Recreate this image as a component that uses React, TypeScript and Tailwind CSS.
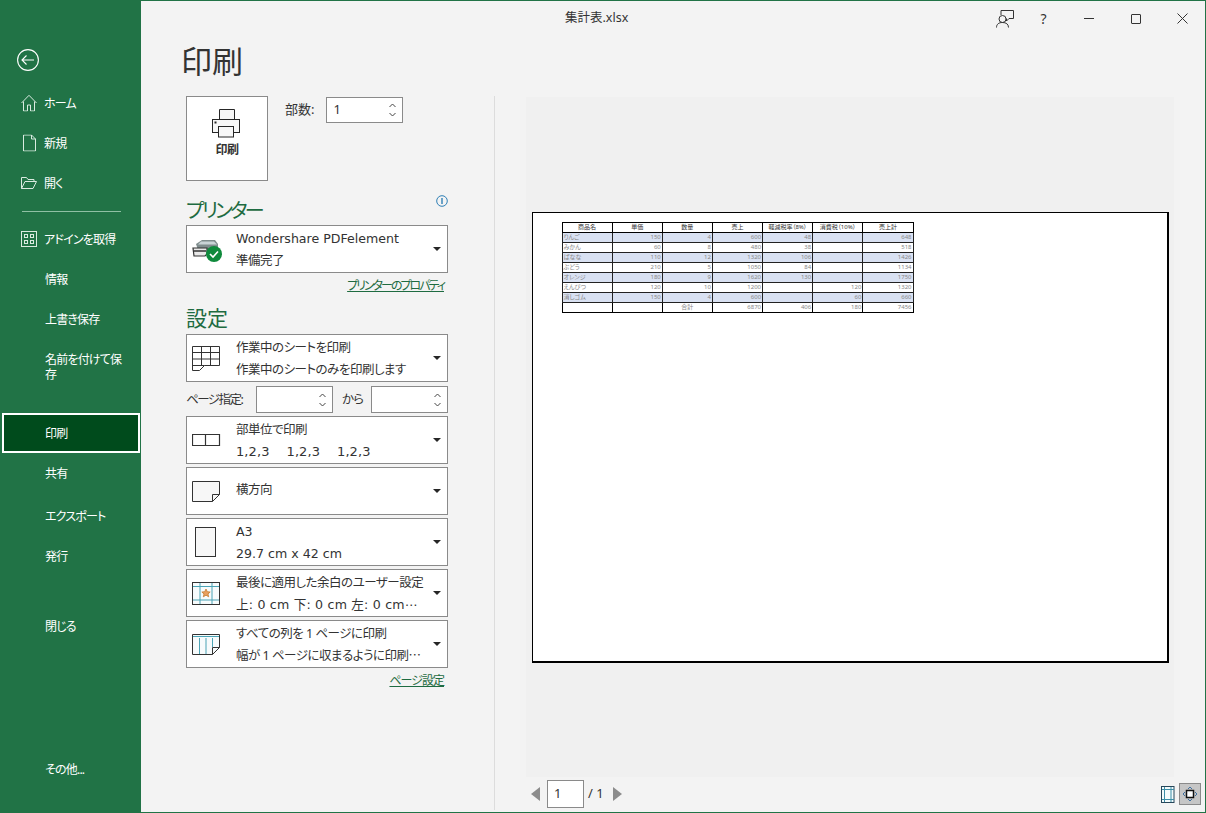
import React from "react";

const font = "font-['Noto_Sans','Noto_Sans_CJK_JP',sans-serif] [font-feature-settings:'palt']";
const latinFont = "font-['DejaVu_Sans','Noto_Sans_CJK_JP',sans-serif]";

function Back() {
  return (
    <svg width="24" height="24" viewBox="0 0 24 24" fill="none" stroke="white" strokeWidth="1.1">
      <circle cx="12" cy="12" r="10.4" />
      <path d="M6 12h12M10.5 7.5 6 12l4.5 4.5" />
    </svg>
  );
}
const HomeI = () => (
  <svg width="16" height="17" viewBox="0 0 16 17" fill="none" stroke="#d9ebe0" strokeWidth="1">
    <path d="M.5 8.5 8 .8l7.5 7.7M2.500 7v9.500h4V10.500h3v6h4V7" />
  </svg>
);
const NewI = () => (
  <svg width="13" height="17" viewBox="0 0 13 17" fill="none" stroke="#d9ebe0" strokeWidth="1">
    <path d="M.5.5h8l4 4v12H.5zM8.500.5v4h4" />
  </svg>
);
const OpenI = () => (
  <svg width="16" height="12" viewBox="0 0 16 12" fill="none" stroke="#d9ebe0" strokeWidth="1">
    <path d="M.5 11.500V.5h5l1.500 2h6v2M.5 11.500h11.500l3.500-7H4l-3.500 7" />
  </svg>
);
const AddinI = () => (
  <svg width="16" height="16" viewBox="0 0 16 16" fill="none" stroke="#d9ebe0" strokeWidth="1">
    <rect x=".5" y=".5" width="15" height="15" />
    <rect x="3.500" y="3.500" width="3" height="3" />
    <rect x="9.500" y="3.500" width="3" height="3" />
    <rect x="3.500" y="9.500" width="3" height="3" />
    <rect x="9.500" y="9.500" width="3" height="3" />
  </svg>
);

function NavRow({ icon, label, h = "h-10" }: { icon?: React.ReactNode; label: React.ReactNode; h?: string }) {
  return (
    <div className={`relative flex items-center ${h} ${icon ? "pl-[43px]" : "pl-[44px]"} text-[12px] leading-[15px] tracking-[-0.8px] text-white`}>
      {icon && <span className="absolute left-[20px] top-1/2 flex w-4 -translate-y-1/2 justify-center">{icon}</span>}
      <span>{label}</span>
    </div>
  );
}

const PrinterBig = () => (
  <svg width="30" height="29" viewBox="0 0 30 29" fill="none" stroke="#262626" strokeWidth="1">
    <path d="M7.500 10.500V.5h15v10" fill="#f7f7f7" />
    <rect x=".5" y="10.500" width="27" height="13" fill="#f7f7f7" />
    <rect x="6.500" y="17.500" width="15" height="10.500" fill="#f7f7f7" />
    <rect x="2.500" y="12.500" width="2" height="2" fill="#262626" stroke="none" />
  </svg>
);

const Caret = () => (
  <svg width="8" height="4" viewBox="0 0 8 4" className="shrink-0"><path d="M0 0h8L4 4z" fill="#262626" /></svg>
);

const Spin = () => (
  <div className="flex flex-col items-center gap-[4px] text-[#444]">
    <svg width="7" height="5" viewBox="0 0 7 5" fill="none" stroke="#444"><path d="M.5 4 3.500 1l3 3" /></svg>
    <svg width="7" height="5" viewBox="0 0 7 5" fill="none" stroke="#444"><path d="M.5 1l3 3 3-3" /></svg>
  </div>
);

const jp = "text-[12.5px] tracking-[-0.5px]";
const lat = `${latinFont} text-[12.6px] tracking-normal`;

function Drop({ icon, a, b, single, aClass = jp, bClass = jp }: { icon: React.ReactNode; a: string; b?: string; single?: boolean; aClass?: string; bClass?: string }) {
  return (
    <div className="flex h-12 w-[262px] items-center border border-[#8a8a8a] bg-white pr-[6px]">
      <div className="flex w-[49px] shrink-0 justify-start pl-[5px]">{icon}</div>
      <div className={`flex min-w-0 flex-1 flex-col ${single ? "pb-[3px]" : "gap-[5px]"} leading-[17px] text-[#333]`}>
        <div className={`whitespace-nowrap ${aClass}`}>{a}</div>
        {b && <div className={`whitespace-pre ${bClass}`}>{b}</div>}
      </div>
      <Caret />
    </div>
  );
}

const PrinterSmall = () => (
  <svg width="31" height="24" viewBox="0 0 31 24" className="mt-[4px]">
    <path d="M4 5 10 1h13l3 4v6l-4 3H7z" fill="#7f8c8d" />
    <path d="M9 2.500h13l3 3H6z" fill="#c9d3d6" />
    <path d="M1 9h14v6l-2 2H2z" fill="#e9e9e9" stroke="#333" strokeWidth="1.200" />
    <path d="M2 12h12" stroke="#333" strokeWidth="1.500" />
    <circle cx="22" cy="15" r="8" fill="#0f8a3c" />
    <path d="M18 15l3 3 5-5.500" stroke="white" strokeWidth="1.600" fill="none" />
  </svg>
);
const SheetI = () => (
  <svg width="29" height="25" viewBox="0 0 29 25" fill="none" stroke="#333" strokeWidth="1">
    <path d="M.5.5h27v19h-15l-5 5H.5zM.5 6.500h27M.5 13h27M9.500.5v19M18.500.5v19M.5 19.500h12" />
  </svg>
);
const CollateI = () => (
  <svg width="29" height="12" viewBox="0 0 29 12" fill="none" stroke="#333" strokeWidth="1">
    <path d="M.5.5h27v11H.5zM13.500.5v11" strokeWidth="1.200" />
  </svg>
);
const LandI = () => (
  <svg width="29" height="21" viewBox="0 0 29 21" fill="none" stroke="#333" strokeWidth="1">
    <path d="M.5.5h27v13l-7 7H.5z" fill="#f7f7f7" />
    <path d="M20.500 20.500v-7h7" />
  </svg>
);
const PageI = () => (
  <svg width="21" height="30" viewBox="0 0 21 30" fill="#f7f7f7" stroke="#333" strokeWidth="1" className="ml-[3px]">
    <rect x=".5" y=".5" width="20" height="29" />
  </svg>
);
const MarginI = () => (
  <svg width="28" height="23" viewBox="0 0 28 23" fill="none">
    <rect x=".5" y=".5" width="27" height="22" fill="#f7fbfc" stroke="#333" />
    <path d="M8 1v21M20 1v21M1 4.500h26M1 18h26" stroke="#4ba3b5" />
    <path d="M14 7l1.300 2.700 2.900.3-2.200 1.900.7 2.900-2.700-1.600-2.700 1.600.7-2.900-2.200-1.900 2.900-.3z" fill="#e8a060" stroke="#c0701f" strokeWidth=".7" />
  </svg>
);
const ScaleI = () => (
  <svg width="28" height="21" viewBox="0 0 28 21" fill="none">
    <path d="M.5.5h27v13l-7 7H.5z" fill="#f7fbfc" stroke="#333" />
    <path d="M7.500 4v16M14 4v16M20.500 4v9M1 2.500h26" stroke="#4ba3b5" />
    <path d="M20.500 20.500v-7h7" stroke="#333" />
  </svg>
);

const rows: string[][] = [
  ["りんご", "150", "4", "600", "48", "", "648"],
  ["みかん", "60", "8", "480", "38", "", "518"],
  ["ばなな", "110", "12", "1320", "106", "", "1426"],
  ["ぶどう", "210", "5", "1050", "84", "", "1134"],
  ["オレンジ", "180", "9", "1620", "130", "", "1750"],
  ["えんぴつ", "120", "10", "1200", "", "120", "1320"],
  ["消しゴム", "150", "4", "600", "", "60", "660"],
];
const head = ["商品名", "単価", "数量", "売上", "軽減税率（8%）", "消費税（10%）", "売上計"];
const foot = ["", "", "合計", "6870", "406", "180", "7456"];

function Sheet() {
  return (
    <table className="w-[352px] table-fixed border-collapse border border-black text-[6px] leading-[8px] text-[#888]">
      <tbody>
        <tr className="h-[10px]">
          {head.map((c) => (
            <td key={c} className="overflow-hidden whitespace-nowrap border border-black text-center text-[#333]">{c}</td>
          ))}
        </tr>
        {rows.map((r, i) => (
          <tr key={i} className={`h-[10px] ${i % 2 === 0 ? "bg-[#d9e1f2]" : "bg-white"}`}>
            {r.map((c, j) => (
              <td key={j} className={`border border-[#222] px-px ${j === 0 ? "text-left" : "text-right"}`}>{c}</td>
            ))}
          </tr>
        ))}
        <tr className="h-[10px]">
          {foot.map((c, j) => (
            <td key={j} className={`border border-black px-px ${j === 2 ? "text-center" : "text-right"}`}>{c}</td>
          ))}
        </tr>
      </tbody>
    </table>
  );
}

export default function App() {
  return (
    <div className={`flex h-[813px] w-[1206px] overflow-hidden border border-[#217346] bg-[#f3f3f3] ${font}`}>
      <aside className="flex w-[140px] shrink-0 flex-col bg-[#217346]">
        <div className="flex h-[82px] items-start pl-[15px] pt-[47px]"><Back /></div>
        <NavRow icon={<HomeI />} label="ホーム" />
        <NavRow icon={<NewI />} label="新規" />
        <NavRow icon={<OpenI />} label="開く" />
        <div className="mx-[21px] mb-[7px] mt-[8px] h-px w-[99px] bg-[#8fc0a4]" />
        <NavRow icon={<AddinI />} label="アドインを取得" />
        <NavRow label="情報" />
        <NavRow label="上書き保存" />
        <NavRow label={<>名前を付けて保<br />存</>} h="h-[55px]" />
        <div className="h-[19px]" />
        <div className="ml-px flex h-10 w-[138px] items-center border-2 border-white bg-[#004b1c] pb-px pl-[41px] pt-[2px] text-[12px] tracking-[-0.7px] text-white">印刷</div>
        <NavRow label="共有" />
        <div className="h-[3px]" />
        <NavRow label="エクスポート" />
        <NavRow label="発行" />
        <div className="h-[30px]" />
        <NavRow label="閉じる" />
        <div className="flex-1" />
        <NavRow label="その他..." />
        <div className="h-[23px]" />
      </aside>

      <main className="flex min-w-0 flex-1 flex-col">
        <header className="flex h-[35px] items-center justify-between">
          <span className="pl-[424px] text-[12.5px] text-[#333]">集計表.xlsx</span>
          <div className="flex items-center text-[#333]">
            <span className="flex w-[38px] justify-center">
              <svg width="18" height="18" viewBox="0 0 18 18" fill="none" stroke="#333" strokeWidth="1">
                <path d="M5 5V.5h12.500v8H13L10.500 11V8.500" />
                <circle cx="6.500" cy="9" r="3.500" fill="#f3f3f3" />
                <path d="M.5 17.500c0-3.500 2.500-5 6-5s6 1.500 6 5" />
              </svg>
            </span>
            <span className="mr-[3px] flex w-[39px] justify-center text-[14px] leading-none">?</span>
            <span className="flex h-8 w-[46px] items-center justify-center"><span className="h-px w-[10px] bg-[#333]" /></span>
            <span className="flex h-8 w-[47px] items-center justify-center"><span className="h-[10px] w-[10px] rounded-[1px] border border-[#333]" /></span>
            <span className="flex h-8 w-[46px] items-center justify-center">
              <svg width="11" height="11" viewBox="0 0 11 11" stroke="#333"><path d="M.5.5l10 10M10.500.5l-10 10" /></svg>
            </span>
          </div>
        </header>

        <div className="flex h-[60px] items-start pl-[40px] pt-[5px] text-[31px] leading-[40px] text-[#333]">印刷</div>

        <div className="flex min-h-0 flex-1">
          <section className="flex w-[353px] shrink-0 flex-col pl-[45px]">
            <div className="flex items-start">
              <div className="flex h-[85px] w-[82px] flex-col items-center border border-[#8a8a8a] bg-white pt-[12px]">
                <PrinterBig />
                <span className="mt-[3px] text-[12px] font-bold tracking-[-0.5px] text-[#333]">印刷</span>
              </div>
              <span className="ml-[17px] pt-[5px] text-[13px] leading-[17px] text-[#333]">部数:</span>
              <div className="ml-[12px] mt-px flex h-[26px] w-[77px] items-center justify-between border border-[#8a8a8a] bg-white pl-[6px] pr-[6px] text-[13px] text-[#333]">
                1<Spin />
              </div>
            </div>

            <div className="relative mt-[13px] h-[31px] w-[262px] pt-[3px] text-[20px] leading-[28px] tracking-[-2.8px] text-[#1e6b41]">
              プリンター
              <svg className="absolute right-0 top-[1px]" width="12" height="12" viewBox="0 0 12 12" fill="none" stroke="#2f7fb5"><circle cx="6" cy="6" r="5.300" /><path d="M6 3v6" strokeWidth="1.400" /></svg>
            </div>
            <Drop icon={<PrinterSmall />} a="Wondershare PDFelement" aClass={lat} b="準備完了" />
            <div className="mt-[4px] w-[258px] text-right text-[12px] leading-[17px] tracking-[-2px] text-[#1e6b41] underline">プリンターのプロパティ</div>
            <div className="mt-[10px] h-[30px] text-[21px] leading-[29px] text-[#1e6b41]">設定</div>
            <Drop icon={<SheetI />} a="作業中のシートを印刷" b="作業中のシートのみを印刷します" />
            <div className="mt-[4px] flex h-[27px] w-[262px] items-center text-[12.5px] text-[#333]">
              <span className="w-[70px] pt-px tracking-[-1.500px]">ページ指定:</span>
              <div className="flex h-[27px] w-[77px] items-center justify-end border border-[#8a8a8a] bg-white pr-[6px]"><Spin /></div>
              <span className="w-[38px] pl-[9px] pt-px tracking-[-1px]">から</span>
              <div className="flex h-[27px] w-[77px] items-center justify-end border border-[#8a8a8a] bg-white pr-[6px]"><Spin /></div>
            </div>
            <div className="mt-[3px] flex flex-col gap-[3px]">
              <Drop icon={<CollateI />} a="部単位で印刷" b={"1,2,3    1,2,3    1,2,3"} bClass={`${latinFont} text-[13px] tracking-[0.1px]`} />
              <Drop icon={<LandI />} a="横方向" single />
              <Drop icon={<PageI />} a="A3" aClass={lat} b="29.7 cm x 42 cm" bClass={lat} />
              <Drop icon={<MarginI />} a="最後に適用した余白のユーザー設定" b="上: 0 cm 下: 0 cm 左: 0 cm⋯" bClass={`${lat} !tracking-[0.2px]`} />
              <Drop icon={<ScaleI />} a="すべての列を 1 ページに印刷" b="幅が 1 ページに収まるように印刷⋯" />
            </div>
            <div className="mt-[4px] w-[258px] text-right text-[12px] leading-[17px] tracking-[-1px] text-[#1e6b41] underline">ページ設定</div>
          </section>

          <div className="mb-[2px] w-px bg-[#dcdcdc]" />

          <section className="flex min-w-0 flex-1 flex-col pl-[31px] pr-[31px]">
            <div className="mt-px flex h-[680px] items-center justify-center bg-[#f0f0f0]">
              <div className="h-[451px] w-[637px] border border-r-2 border-b-2 border-black bg-white pl-[29px] pt-[9px]">
                <Sheet />
              </div>
            </div>
            <div className="flex h-[34px] items-center">
              <svg width="9" height="14" viewBox="0 0 9 14" className="ml-[5px]"><path d="M9 0v14L0 7z" fill="#8c8c8c" /></svg>
              <div className="ml-[7px] flex h-[28px] w-[37px] items-center border border-[#8a8a8a] bg-white pl-[6px] text-[13px] text-[#333]">1</div>
              <span className="ml-[4px] text-[13px] text-[#333]">/ 1</span>
              <svg width="9" height="14" viewBox="0 0 9 14" className="ml-[9px]"><path d="M0 0v14l9-7z" fill="#8c8c8c" /></svg>
              <div className="flex-1" />
              <svg width="14" height="17" viewBox="0 0 14 17" fill="none" className="mr-[4px]">
                <rect x=".5" y=".5" width="12.500" height="16" fill="#f3fbfc" stroke="#26475a" />
                <path d="M3.500 1v15M10 1v15M1 3.500h12M1 13.500h12" stroke="#3c8fa8" />
              </svg>
              <div className="mr-[-27px] flex h-[22px] w-[22px] items-center justify-center border border-[#8a8a8a] bg-[#c6c6c6]">
                <svg width="16" height="16" viewBox="0 0 16 16" fill="none">
                  <rect x="4.500" y="4.500" width="7" height="7" fill="white" stroke="#111" strokeWidth="1.500" />
                  <path d="M6 3l2-2 2 2M6 13l2 2 2-2M3 6L1 8l2 2M13 6l2 2-2 2" stroke="#3f6f9e" />
                </svg>
              </div>
            </div>
          </section>
        </div>
      </main>
    </div>
  );
}
